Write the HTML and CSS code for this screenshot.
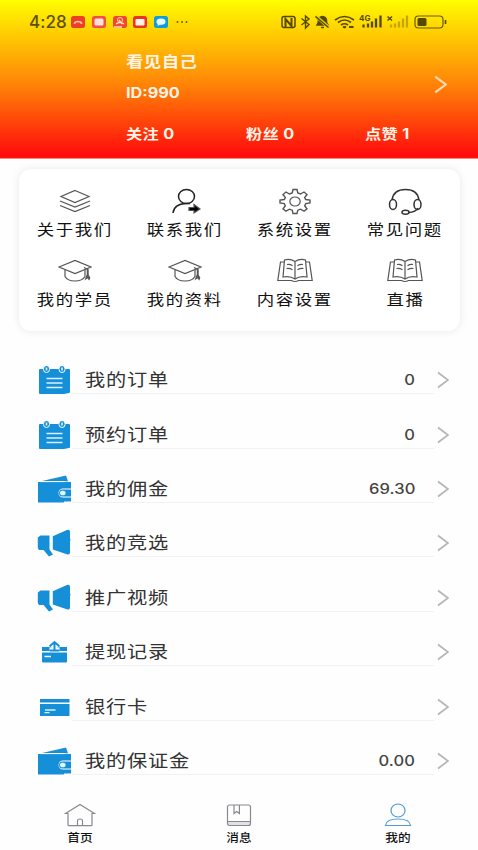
FILE: index.html
```html
<!DOCTYPE html>
<html lang="zh-CN">
<head>
<meta charset="utf-8">
<title>我的</title>
<link rel="stylesheet" href="styles.css">
</head>
<body>
<svg class="defs" aria-hidden="true">
  <symbol id="cap" viewBox="0 0 34 22"><path d="M1 7.500 17 1l16 6.500-16 6.500z"/><path d="M7 10.500v6.500q2.500 4.500 10 4.500t10-4.500V10.500M26 8l4 2v5.500"/><path d="M29.500 10v5.500M29.500 15l-1.500 4 1.500-1 1.500 1.500.5-1.500z" stroke-width="1.500"/></symbol>
  <symbol id="book" viewBox="0 0 36 24"><path d="M18 3Q13-.2 7.500 1.500L6 18.500q7-1.500 12 2 5-3.500 12-2L28.500 1.500Q23-.2 18 3zV20.500"/><path d="M7 3.500H3.500L.8 22H14.500q3.500 2 7 0H35.200L32.500 3.500H29M10 6q3-.5 5.500 1.200M9.500 10q3-.5 6 1.200M26 6q-3-.5-5.500 1.200M26.500 10q-3-.5-6 1.200"/></symbol>
  <symbol id="order" viewBox="0 0 34 28"><path fill="#1590d8" d="M3 3h29q1 0 1 1v22q0 1-1 1l-5 1H3q-1 0-1-1V4q0-1 1-1z"/><path fill="#1590d8" stroke="#fff" stroke-width="1" d="M6.500 2.500a3 3 0 0 1 6 0v1a3 3 0 0 1-6 0zM22 2.500a3 3 0 0 1 6 0v1a3 3 0 0 1-6 0z"/><path stroke="#d9f0ff" stroke-width="1.600" d="M9.500 1.500v3M25 1.500v3"/><path stroke="#d9f0ff" stroke-width="1.700" d="M9.500 12.500h16M9.500 17h16M9.500 21.500h16"/></symbol>
  <symbol id="wallet" viewBox="0 0 34 28"><path fill="#1590d8" d="M4 6.200 29 .500 31 6.200z"/><path fill="#1590d8" d="M1 7h33v6.500h-8a4.500 4.500 0 0 0 0 9h8v4H27v1H1z"/><path stroke="#fff" stroke-width="1" d="M3 6.600h25"/><path fill="#1590d8" d="M25.500 14.500h8.500v7h-8.500a3.500 3.500 0 0 1 0-7z"/><ellipse cx="25.800" cy="18" rx="2.800" ry="2.300" fill="#e9f7ff"/></symbol>
  <symbol id="horn" viewBox="0 0 34 28"><path fill="#1590d8" d="M3.500 6.500h9v14l3.500 5-4 2L6.500 21H2L.8 19V8.500zM15.800 7.200 30.500.8q2.500-.5 2.500 2v6.500q1 1.500 0 3V23.500q0 2.500-2.500 2L15.800 20.500z"/></symbol>
  <symbol id="phone" viewBox="0 0 14 12"><rect width="14" height="12" rx="2.500" fill="#ef3e27"/><path d="M2.500 8Q3 4.800 7 4.800T11.500 8L9 7.500V6.500H5v1z" fill="#ffc4a8"/></symbol>
  <symbol id="go" viewBox="0 0 12 18"><path d="m1 1.500 10 7.500L1 16.500"/></symbol>
</svg>
<main class="page">
  <header class="hero">
    <div class="status">
      <div class="status-left">
        <span class="clock">4:28</span>
        <svg width="14" height="12"><use href="#phone"/></svg>
        <svg width="14" height="12" viewBox="0 0 14 12"><rect width="14" height="12" rx="2.500" fill="#f64e43"/><rect x="2.500" y="2.500" width="9" height="7" rx="1.500" fill="#ffe1da"/></svg>
        <svg width="14" height="12" viewBox="0 0 14 12"><rect width="14" height="12" rx="2.500" fill="#ee4830"/><circle cx="7" cy="4" r="2.500" stroke="#ffd0a2"/><path d="M3 8q4-3 8 0M1 11h8M6 4l3 4" stroke="#ffe1c1" stroke-width="1.300"/></svg>
        <svg width="14" height="12" viewBox="0 0 14 12"><rect width="14" height="12" rx="2.500" fill="#e93420"/><rect x="2.500" y="3" width="9" height="6.500" rx="1" fill="#fff0e8"/></svg>
        <svg width="14" height="12" viewBox="0 0 14 12"><rect width="14" height="12" rx="2.500" fill="#0d9ed5"/><ellipse cx="7" cy="5.600" rx="4.500" ry="3.200" fill="#eaffff"/><path d="m4 7-.5 3L7 8z" fill="#eaffff"/></svg>
        <svg class="dots" width="14" height="12" viewBox="0 0 14 12"><circle cx="2.500" cy="6" r="1"/><circle cx="7" cy="6" r="1"/><circle cx="11.500" cy="6" r="1"/></svg>
      </div>
      <svg class="signals" width="166" height="16" viewBox="281 14 166 16">
        <g stroke="#554900" stroke-width="1.500">
          <rect x="282" y="16.500" width="13" height="11" rx="2"/><path d="M285.500 27v-8l6 7v-8" stroke-width="2"/>
          <path d="m301.500 18.500 7.500 6-3.500 3.500V16l3.500 3-7.500 6" stroke-width="1.400"/>
          <path fill="#554900" d="M317 25h11l-1.500-2.500V20q-.5-3-4-3.500-4 .5-4.200 4v2z"/><path d="M321 27.500h3"/><path d="m315.500 16 13.500 11.500" stroke="#f0d000" stroke-width="3"/><path d="m315.500 16.500 13 11"/>
          <path d="M335 20q9.500-7 19 0M338 22.500q6.500-5 13 0M341 25q3.500-2.500 7 0" stroke-width="1.700"/><path d="m343 26.500 1.500 1 1.500-1M349 27h4.500" stroke-width="1.800"/>
        </g>
        <text x="359" y="20.500" class="net">4G</text>
        <path d="M363.500 27.500v-3M368 27.500v-4M372 27.500v-6M376 27.500v-9M380.500 27.500v-12" stroke="#554900" stroke-width="2.300"/>
        <path d="m387.500 16.500 4.500 4m0-4-4.500 4" stroke="#554900" stroke-width="1.500"/>
        <path d="M391 27.500v-3M395 27.500v-4M399 27.500v-6M403 27.500v-9M407 27.500v-12" stroke="#c5a600" stroke-width="2.300"/>
        <rect x="415" y="16" width="28" height="12" rx="3.500" stroke="#695b00" stroke-width="1.200"/><rect x="417.500" y="18" width="9" height="8" rx="1.500" fill="#554900"/><path d="M445.500 20v4" stroke="#554900" stroke-width="1.600"/>
      </svg>
    </div>
    <div class="profile">
      <div class="who"><p class="name"><span class="w">看见自己</span></p><p class="uid"><span class="w">ID:990</span></p></div>
      <svg class="hero-go" width="13" height="19"><use href="#go"/></svg>
    </div>
    <div class="stats"><p><span class="w">关注 0</span></p><p><span class="w">粉丝 0</span></p><p><span class="w">点赞 1</span></p></div>
  </header>

  <section class="card">
    <a class="tile"><svg width="34" height="27" viewBox="0 0 34 27"><path d="M17 2.500 31 8.500 17 14.500 3 8.500z"/><path d="m2 13 15 6 15-6M2 17.500l15 6 15-6"/></svg><span>关于我们</span></a>
    <a class="tile"><svg width="34" height="27" viewBox="0 0 34 27"><g stroke="#222" stroke-width="1.500"><ellipse cx="18.500" cy="8.500" rx="8" ry="7"/><path d="M5 25q1-9 13-9.500h4"/></g><path d="M21 19.500h5v-3l6 4.500-6 4v-2.500h-5z" fill="#000"/></svg><span>联系我们</span></a>
    <a class="tile"><svg width="34" height="27" viewBox="0 0 34 27"><path stroke-width="1.400" d="M15 1.500h4l.8 3.500 2.700 1 3.500-2 3 2.500-2.300 3 1 2 4.300.5v3l-4.300.6-1 2.200 2.300 3-3 2.400-3.500-2-2.700 1-.8 3.300h-4l-.8-3.300-2.700-1-3.500 2-3-2.400 2.300-3-1-2.200L2 15v-3l4.300-.5 1-2L5 6.500 8 4l3.500 2 2.700-1z"/><ellipse cx="17" cy="13.500" rx="5.200" ry="4.500"/></svg><span>系统设置</span></a>
    <a class="tile"><svg width="34" height="27" viewBox="0 0 34 27"><g stroke="#333" stroke-width="1.500"><path d="M4 12Q5.500 1.500 17.500 1.500T31 12M30 20q-2 4-9.500 4.500"/><ellipse cx="5" cy="16.500" rx="3.500" ry="5"/><ellipse cx="29.500" cy="16.500" rx="3.500" ry="5"/><ellipse cx="17.500" cy="24.300" rx="3.500" ry="2"/></g></svg><span>常见问题</span></a>
    <a class="tile"><svg width="34" height="22"><use href="#cap"/></svg><span>我的学员</span></a>
    <a class="tile"><svg width="34" height="22"><use href="#cap"/></svg><span>我的资料</span></a>
    <a class="tile"><svg width="36" height="24"><use href="#book"/></svg><span>内容设置</span></a>
    <a class="tile"><svg width="36" height="24"><use href="#book"/></svg><span>直播</span></a>
  </section>

  <section class="list">
    <a class="row"><svg class="ico" width="34" height="28"><use href="#order"/></svg><div class="line"><span class="label">我的订单</span><span class="val">0</span></div><svg class="go" width="12" height="18"><use href="#go"/></svg></a>
    <a class="row"><svg class="ico" width="34" height="28"><use href="#order"/></svg><div class="line"><span class="label">预约订单</span><span class="val">0</span></div><svg class="go" width="12" height="18"><use href="#go"/></svg></a>
    <a class="row"><svg class="ico" width="34" height="28"><use href="#wallet"/></svg><div class="line"><span class="label">我的佣金</span><span class="val">69.30</span></div><svg class="go" width="12" height="18"><use href="#go"/></svg></a>
    <a class="row"><svg class="ico" width="34" height="28"><use href="#horn"/></svg><div class="line"><span class="label">我的竞选</span></div><svg class="go" width="12" height="18"><use href="#go"/></svg></a>
    <a class="row"><svg class="ico" width="34" height="28"><use href="#horn"/></svg><div class="line"><span class="label">推广视频</span></div><svg class="go" width="12" height="18"><use href="#go"/></svg></a>
    <a class="row"><svg class="ico" width="34" height="28" viewBox="0 0 34 28"><path fill="#1590d8" d="M5 9h25v4H5zM5 14.500h25v9q0 1-1 1H6q-1 0-1-1z"/><path stroke="#fff" stroke-width="4.500" d="M17.500 5v7M12.500 11.500h10"/><path stroke="#1590d8" stroke-width="2" d="M17.500 4v8.500M12.500 8.500l5-4.500 5 4.500M12.500 12.500h10"/><path stroke="#fff" stroke-width="1.500" d="M7.500 18.500H14"/></svg><div class="line"><span class="label">提现记录</span></div><svg class="go" width="12" height="18"><use href="#go"/></svg></a>
    <a class="row"><svg class="ico" width="34" height="28" viewBox="0 0 34 28"><path fill="#1590d8" d="M3 6h29.500v3.500H3zM3 11h29.500v12H3z"/><path stroke="#d9f0ff" stroke-width="1.300" d="M8 17h10.500M7.500 19.700h5"/></svg><div class="line"><span class="label">银行卡</span></div><svg class="go" width="12" height="18"><use href="#go"/></svg></a>
    <a class="row"><svg class="ico" width="34" height="28"><use href="#wallet"/></svg><div class="line"><span class="label">我的保证金</span><span class="val">0.00</span></div><svg class="go" width="12" height="18"><use href="#go"/></svg></a>
  </section>

  <nav class="tabs">
    <a class="tab"><svg width="32" height="24" viewBox="0 0 32 24"><path d="m1.500 10.500 14.500-9 14.500 9h-2.500v11.300q0 .9-1 .9H5q-1 0-1-.9V10.500zM13.500 22.500V18q0-2 2.500-2t2.500 2v4.500"/></svg><span>首页</span></a>
    <a class="tab"><svg width="32" height="24" viewBox="0 0 32 24"><path fill="#e2e2e6" stroke="none" d="M5 18.500h22v4H5z"/><rect x="4.500" y="2" width="23" height="20.500" rx="2"/><path d="M4.500 18.500h23M11 2v8.500l2.700-2 2.700 2V2"/></svg><span>消息</span></a>
    <a class="tab active"><svg width="32" height="24" viewBox="0 0 32 24"><ellipse cx="16" cy="7.500" rx="7" ry="6.500"/><path d="M3.500 22.500q.5-6.500 12.500-6.500t12.500 6.500z"/></svg><span>我的</span></a>
  </nav>
</main>
</body>
</html>
```
FILE: styles.css
```css
* { box-sizing: border-box; }
body { margin: 0; background: #fefefe; font-family: Inter, "Noto Sans CJK SC", sans-serif; color: #111; }
p { margin: 0; }
svg { display: block; flex: none; fill: none; }
.defs { position: absolute; width: 0; height: 0; }
.page { display: flex; flex-direction: column; width: 478px; height: 850px; overflow: hidden; }
.hero { height: 159px; flex: none; background: linear-gradient(#ffff00 0%, #ffef00 6%, #ff8507 53%, #ff0c0c 98%); border-bottom: 1px solid #ff8b7b; color: #fff4e6; }
.status { display: flex; justify-content: space-between; align-items: center; height: 44px; padding: 0 31px 0 29px; }
.status-left { display: flex; align-items: center; gap: 6.700px; }
.clock { width: 35.500px; font-size: 17px; font-weight: 500; color: #5d5000; letter-spacing: .1px; }
.dots { fill: #6b5d00; }
.net { font: 700 8px Inter, sans-serif; fill: #554900; }
.profile { display: flex; justify-content: space-between; align-items: center; height: 66px; padding: 0 31px 0 126px; }
.who p { height: 31px; line-height: 31px; }
.w { display: inline-block; transform: scaleX(1.16); transform-origin: left; }
.name { font-size: 15px; font-weight: 700; letter-spacing: .4px; }
.uid { font-size: 14px; font-weight: 700; }
.hero-go { stroke: #ffd9b5; stroke-width: 2; margin-top: 15px; }
.stats { display: grid; grid-template-columns: repeat(3, 119.500px); padding-left: 126px; font-size: 14px; font-weight: 700; line-height: 48px; letter-spacing: .3px; }
.card { display: grid; grid-template-columns: repeat(4, 110px); grid-template-rows: 70px 70px; flex: none; width: 441px; height: 162px; margin: 10px 0 0 19px; padding: 17px 0 0 1px; border-radius: 12px; background: #fff; box-shadow: 0 0 9px rgba(0,0,0,.09); }
.tile { display: flex; flex-direction: column; align-items: center; }
.tile svg { stroke: #555; stroke-width: 1.200; height: 31px; }
.tile svg:has(use) { height: 29px; padding: 0; margin-bottom: 2px; }
.tile span { font-size: 15px; line-height: 26px; letter-spacing: 1.400px; transform: scaleX(1.16); }
.list { padding: 22px 29px 0 37px; }
.row { display: flex; align-items: center; height: 54.400px; }
.line { display: flex; align-items: center; justify-content: space-between; flex: 1; height: 28px; margin-left: 1px; padding: 0 19px 2px 13px; border-bottom: 1px solid #f2f2f2; }
.label { font-size: 17.500px; color: #333; letter-spacing: .7px; transform: scaleX(1.155); transform-origin: left; }
.val { padding-top: 2px; font-size: 14px; font-weight: 500; color: #444; letter-spacing: .1px; transform: scaleX(1.18); transform-origin: right; }
.go { stroke: #b5b5b5; stroke-width: 1.700; margin-left: 3px; }
.tabs { display: grid; grid-template-columns: repeat(3, 1fr); margin-top: auto; height: 47px; flex: none; }
.tab { display: flex; flex-direction: column; align-items: center; stroke: #88888e; stroke-width: 1.200; }
.tab span { font-size: 11px; font-weight: 500; line-height: 20px; padding-top: 1px; transform: scaleX(1.15); }
.active { stroke: #559bd2; }
```
